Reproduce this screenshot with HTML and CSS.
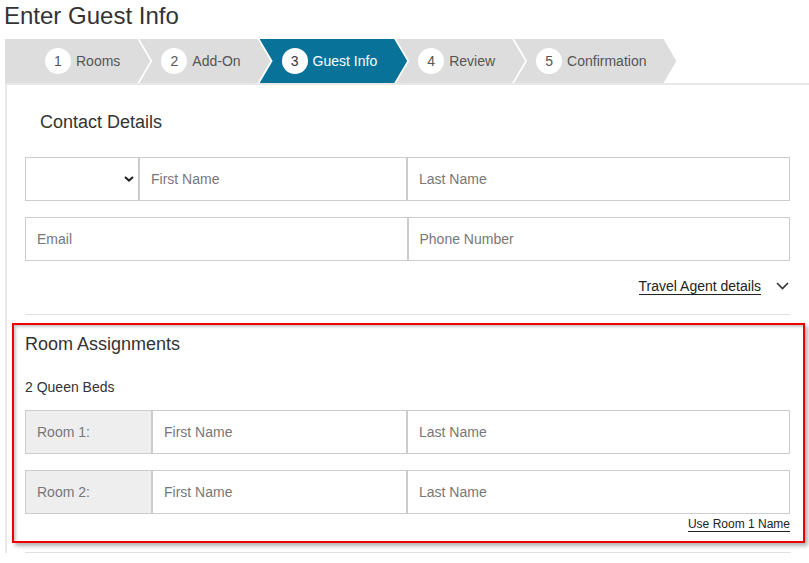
FILE: index.html
```html
<!DOCTYPE html>
<html lang="en">
<head>
<meta charset="utf-8">
<title>Enter Guest Info</title>
<link rel="stylesheet" href="styles.css">
</head>
<body>
<h1 class="page-title">Enter Guest Info</h1>

<ol class="steps">
  <li class="step step-first"><span class="step-num">1</span><span class="step-label">Rooms</span></li>
  <li class="step"><span class="step-num">2</span><span class="step-label">Add-On</span></li>
  <li class="step step-active"><span class="step-num">3</span><span class="step-label">Guest Info</span></li>
  <li class="step"><span class="step-num">4</span><span class="step-label">Review</span></li>
  <li class="step"><span class="step-num">5</span><span class="step-label">Confirmation</span></li>
</ol>

<section class="card">
  <h2 class="contact-title">Contact Details</h2>

  <div class="field-row">
    <div class="select-wrap">
      <select class="select-field" aria-label="Title">
        <option></option>
      </select>
      <svg class="select-chevron" width="10" height="6" viewBox="0 0 10 6" aria-hidden="true">
        <path d="M1 1 L5 4.6 L9 1" fill="none" stroke="#222" stroke-width="2"/>
      </svg>
    </div>
    <input class="field field-first" type="text" placeholder="First Name">
    <input class="field field-last" type="text" placeholder="Last Name">
  </div>

  <div class="field-row row-gap">
    <input class="field field-half" type="text" placeholder="Email">
    <input class="field field-half" type="text" placeholder="Phone Number">
  </div>

  <div class="agent-row">
    <a class="agent-link" href="#">Travel Agent details</a>
    <svg class="agent-chevron" width="13" height="8" viewBox="0 0 13 8" aria-hidden="true">
      <path d="M1 1 L6.5 6.5 L12 1" fill="none" stroke="#333" stroke-width="1.6"/>
    </svg>
  </div>

  <hr class="divider divider-contact">

  <div class="rooms-box">
    <h2 class="rooms-title">Room Assignments</h2>
    <p class="room-type">2 Queen Beds</p>

    <div class="field-row room-row">
      <div class="room-label">Room 1:</div>
      <input class="field field-room-first" type="text" placeholder="First Name">
      <input class="field field-last" type="text" placeholder="Last Name">
    </div>
    <div class="field-row room-row row-gap">
      <div class="room-label">Room 2:</div>
      <input class="field field-room-first" type="text" placeholder="First Name">
      <input class="field field-last" type="text" placeholder="Last Name">
    </div>

    <div class="use-row">
      <a class="use-link" href="#">Use Room 1 Name</a>
    </div>
  </div>

  <hr class="divider divider-bottom">
</section>
</body>
</html>
```

FILE: styles.css
```css
* {
  box-sizing: border-box;
}

html, body {
  margin: 0;
  background: #fff;
}

body {
  padding: 2px 0 0 5px;
  font-family: "Liberation Sans", Arial, sans-serif;
  color: #333;
  overflow: hidden;
}

.page-title {
  margin: 0 0 9px -1px;
  font-size: 24px;
  line-height: 28px;
  font-weight: normal;
  color: #333;
}

/* ---------- Steps ---------- */
.steps {
  display: flex;
  margin: 0;
  padding: 0;
  list-style: none;
  height: 44px;
}

.step {
  display: flex;
  align-items: center;
  height: 44px;
  padding: 0 30px 0 22px;
  margin-left: -11px;
  background: #dddddd;
  color: #555;
  font-size: 14px;
  clip-path: polygon(0 0, calc(100% - 13px) 0, 100% 50%, calc(100% - 13px) 100%, 0 100%, 13px 50%);
}

.step-first {
  margin-left: 0;
  padding-left: 40px;
  clip-path: polygon(0 0, calc(100% - 13px) 0, 100% 50%, calc(100% - 13px) 100%, 0 100%);
}

.step-active {
  background: #087299;
  color: #fff;
}

.step-num {
  display: flex;
  align-items: center;
  justify-content: center;
  width: 26px;
  height: 26px;
  border-radius: 50%;
  background: #fff;
  color: #555;
  font-size: 14px;
  margin-right: 5px;
}

.step-active .step-num {
  color: #333;
}

.step-label {
  line-height: 16px;
  white-space: nowrap;
}

/* ---------- Card ---------- */
.card {
  border-top: 2px solid #e8e8e8;
  border-left: 2px solid #e8e8e8;
  padding: 0 19px 0 18px;
}

.contact-title {
  margin: 27px 0 0;
  padding-left: 15px;
  font-size: 18px;
  line-height: 20px;
  font-weight: normal;
  color: #333;
}

.field-row {
  display: flex;
  height: 44px;
  margin-top: 25px;
}

.field-row.row-gap {
  margin-top: 16px;
}

.field {
  height: 44px;
  margin: 0;
  padding: 0 11px;
  border: 1px solid #cccccc;
  border-radius: 0;
  background: #fff;
  font-family: "Liberation Sans", Arial, sans-serif;
  font-size: 14px;
  color: #333;
  outline: none;
}

.field::placeholder {
  color: #777;
  opacity: 1;
}

.select-wrap {
  position: relative;
  width: 114px;
  flex: 0 0 114px;
  height: 44px;
}

.select-field {
  appearance: none;
  -webkit-appearance: none;
  width: 100%;
  height: 44px;
  margin: 0;
  border: 1px solid #cccccc;
  border-radius: 0;
  background: #fff;
  font-family: "Liberation Sans", Arial, sans-serif;
  font-size: 14px;
  outline: none;
}

.select-chevron {
  position: absolute;
  right: 5px;
  top: 19px;
  pointer-events: none;
}

.field-first {
  flex: 0 0 268px;
  width: 268px;
}

.field-last {
  flex: 1 1 auto;
  width: 0;
}

.field-half {
  flex: 1 1 0;
  width: 0;
}

.agent-row {
  display: flex;
  justify-content: flex-end;
  align-items: center;
  margin-top: 17px;
}

.agent-link {
  display: inline-block;
  font-size: 14px;
  line-height: 16px;
  color: #222;
  text-decoration: none;
  border-bottom: 1px solid #222;
}

.agent-chevron {
  margin-left: 15px;
  margin-right: 1px;
  margin-bottom: 1px;
}

.divider {
  margin: 0;
  border: 0;
  border-top: 1px solid #e0e0e0;
  height: 0;
}

.divider-contact {
  margin-top: 19px;
}

/* ---------- Room assignments ---------- */
.rooms-box {
  margin: 8px -15px 0 -13px;
  padding: 9px 13px 9px 11px;
  border: 2px solid #ee0000;
  box-shadow: 3px 3px 4px rgba(0, 0, 0, 0.3), inset 2px 2px 3px rgba(0, 0, 0, 0.22);
}

.rooms-title {
  margin: 0;
  font-size: 18px;
  line-height: 20px;
  font-weight: normal;
  color: #333;
}

.room-type {
  margin: 25px 0 0;
  font-size: 14px;
  line-height: 16px;
  color: #333;
}

.room-row {
  margin-top: 15px;
}

.room-label {
  flex: 0 0 127px;
  width: 127px;
  height: 44px;
  display: flex;
  align-items: center;
  padding-left: 11px;
  border: 1px solid #cccccc;
  background: #eeeeee;
  color: #777;
  font-size: 14px;
}

.field-room-first {
  flex: 0 0 255px;
  width: 255px;
}

.use-row {
  display: flex;
  justify-content: flex-end;
  margin-top: 3px;
}

.use-link {
  display: inline-block;
  font-size: 12px;
  line-height: 14px;
  color: #222;
  text-decoration: none;
  border-bottom: 1px solid #222;
}

.divider-bottom {
  margin-top: 9px;
}
```
